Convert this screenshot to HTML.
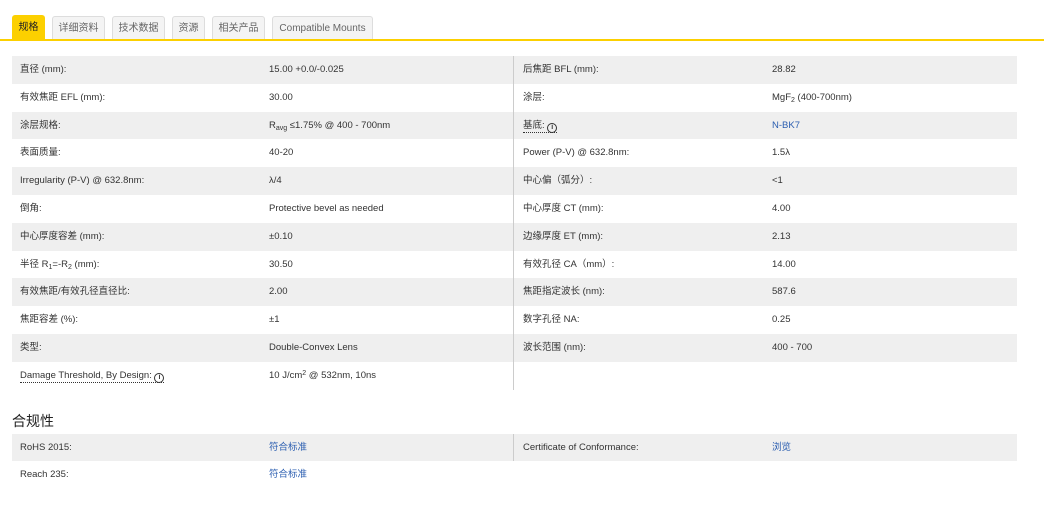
<!DOCTYPE html>
<html><head><meta charset="utf-8"><style>
*{margin:0;padding:0;box-sizing:border-box}
body{width:1044px;height:514px;background:#fff;font-family:"Liberation Sans","Noto Sans CJK SC",sans-serif;color:#333;position:relative;overflow:hidden}
.tabs{position:absolute;top:15px;left:12px;height:25px}
.tab{position:absolute;top:1px;height:24px;background:#f4f4f4;border:1px solid #ddd;border-bottom:none;border-radius:3px 3px 0 0;font-size:10px;color:#666;text-align:center;line-height:24px}
.tab.act{background:#fcd000;border-color:#fcd000;color:#222;top:0;height:25px}
.line{position:absolute;top:39px;left:0;width:1044px;height:2px;background:#fcd000}
.tbl{position:absolute;left:12px;width:1005px}
.row{height:27.8px;position:relative;font-size:9.5px;line-height:27.8px;color:#333}
.row.s{background:#efefef}
.row span{position:absolute;top:0;white-space:nowrap}
.c1{left:8px}.c2{left:257px}.c3{left:511px}.c4{left:760px}
.dv{position:absolute;left:501px;top:0;width:1px;height:100%;background:#ccc;z-index:2}
a{color:#2a5db0;text-decoration:none}
.dot{border-bottom:1px dotted #333;padding-bottom:1px}
.ic{display:inline-block;width:10px;height:10px;border:1.5px solid #333;border-radius:50%;font-size:7px;line-height:7px;text-align:center;font-weight:bold;font-style:normal;vertical-align:-1px}
h3{position:absolute;left:12px;top:411px;font-size:14px;font-weight:normal;color:#222}
sub{font-size:7px;vertical-align:-2px;line-height:0}sup{font-size:7px;vertical-align:3px;line-height:0}
</style></head><body>
<div class="tabs">
<div class="tab act" style="left:0;width:33px">规格</div>
<div class="tab" style="left:40px;width:53px">详细资料</div>
<div class="tab" style="left:100px;width:53px">技术数据</div>
<div class="tab" style="left:160px;width:33px">资源</div>
<div class="tab" style="left:200px;width:53px">相关产品</div>
<div class="tab" style="left:260px;width:101px">Compatible Mounts</div>
</div>
<div class="line"></div>
<div class="tbl" style="top:56px">
<div class="dv"></div>
<div class="row s"><span class="c1">直径 (mm):</span><span class="c2">15.00 +0.0/-0.025</span><span class="c3">后焦距 BFL (mm):</span><span class="c4">28.82</span></div>
<div class="row"><span class="c1">有效焦距 EFL (mm):</span><span class="c2">30.00</span><span class="c3">涂层:</span><span class="c4">MgF<sub>2</sub> (400-700nm)</span></div>
<div class="row s"><span class="c1">涂层规格:</span><span class="c2">R<sub>avg</sub> ≤1.75% @ 400 - 700nm</span><span class="c3"><b class="dot" style="font-weight:normal">基底: <i class="ic">i</i></b></span><span class="c4"><a>N-BK7</a></span></div>
<div class="row"><span class="c1">表面质量:</span><span class="c2">40-20</span><span class="c3">Power (P-V) @ 632.8nm:</span><span class="c4">1.5λ</span></div>
<div class="row s"><span class="c1">Irregularity (P-V) @ 632.8nm:</span><span class="c2">λ/4</span><span class="c3">中心偏（弧分）:</span><span class="c4">&lt;1</span></div>
<div class="row"><span class="c1">倒角:</span><span class="c2">Protective bevel as needed</span><span class="c3">中心厚度 CT (mm):</span><span class="c4">4.00</span></div>
<div class="row s"><span class="c1">中心厚度容差 (mm):</span><span class="c2">±0.10</span><span class="c3">边缘厚度 ET (mm):</span><span class="c4">2.13</span></div>
<div class="row"><span class="c1">半径 R<sub>1</sub>=-R<sub>2</sub> (mm):</span><span class="c2">30.50</span><span class="c3">有效孔径 CA（mm）:</span><span class="c4">14.00</span></div>
<div class="row s"><span class="c1">有效焦距/有效孔径直径比:</span><span class="c2">2.00</span><span class="c3">焦距指定波长 (nm):</span><span class="c4">587.6</span></div>
<div class="row"><span class="c1">焦距容差 (%):</span><span class="c2">±1</span><span class="c3">数字孔径 NA:</span><span class="c4">0.25</span></div>
<div class="row s"><span class="c1">类型:</span><span class="c2">Double-Convex Lens</span><span class="c3">波长范围 (nm):</span><span class="c4">400 - 700</span></div>
<div class="row"><span class="c1"><b class="dot" style="font-weight:normal">Damage Threshold, By Design: <i class="ic">i</i></b></span><span class="c2">10 J/cm<sup>2</sup> @ 532nm, 10ns</span></div>
</div>
<h3>合规性</h3>
<div class="tbl" style="top:434px">
<div class="dv" style="height:27px"></div>
<div class="row s" style="height:27px"><span class="c1">RoHS 2015:</span><span class="c2"><a>符合标准</a></span><span class="c3">Certificate of Conformance:</span><span class="c4"><a>浏览</a></span></div>
<div class="row"><span class="c1">Reach 235:</span><span class="c2"><a>符合标准</a></span></div>
</div>
</body></html>
